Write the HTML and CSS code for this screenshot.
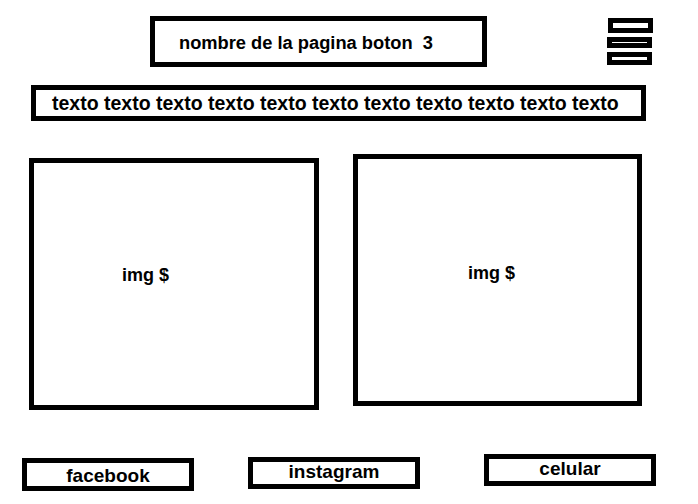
FILE: index.html
```html
<!DOCTYPE html>
<html>
<head>
    <meta charset="UTF-8">
    <meta name="viewport" content="width=device-width, initial-scale=1.0">
    <title>nombre de la pagina</title>
    <link rel="stylesheet" href="styles.css">
</head>
<body>
  <div class="top">
      <div class="title">nombre de la pagina boton&nbsp; 3</div>
      <div class="menu">
          <span class="bar bar1"></span>
          <span class="bar bar2"></span>
          <span class="bar bar3"></span>
      </div>
  </div>

  <div class="texto">texto texto texto texto texto texto texto texto texto texto texto</div>

  <div class="imgs">
      <div class="img img1">img $</div>
      <div class="img img2">img $</div>
  </div>

  <div class="footer">
      <div class="btn fb">facebook</div>
      <div class="btn ig">instagram</div>
      <div class="btn cel">celular</div>
  </div>
</body>
</html>
```

FILE: styles.css
```css
* {
  box-sizing: border-box;
}

body {
  margin: 0;
  background-color: #fff;
  color: #000;
  font-family: "Liberation Sans", Arial, sans-serif;
  font-weight: bold;
  font-size: 18px;
}

.top {
  display: flex;
  align-items: flex-start;
  padding-top: 16px;
}
.title {
  margin-left: 150px;
  width: 337px;
  height: 51px;
  border: 5px solid #000;
  display: flex;
  align-items: center;
  padding-left: 24px;
  padding-top: 2px;
  font-size: 18.3px;
}
.menu {
  margin-left: 120px;
  margin-top: 2px;
  display: flex;
  flex-direction: column;
}
.bar {
  display: block;
  width: 45px;
  border: 5px solid #000;
}
.bar1 {
  height: 15px;
  margin-left: 1px;
}
.bar2 {
  height: 11px;
  margin-top: 4px;
}
.bar3 {
  height: 13px;
  margin-top: 4px;
}

.texto {
  margin: 18px 0 0 31px;
  width: 615px;
  height: 36px;
  border: 5px solid #000;
  display: flex;
  align-items: center;
  padding-left: 16px;
  font-size: 19.5px;
  white-space: nowrap;
}

.imgs {
  display: flex;
  align-items: flex-start;
  margin-top: 33px;
}
.img {
  height: 252px;
  border: 5px solid #000;
  display: flex;
  align-items: center;
}
.img1 {
  margin: 4px 0 0 29px;
  width: 290px;
  padding-left: 88px;
  padding-bottom: 18px;
}
.img2 {
  margin-left: 34px;
  width: 289px;
  justify-content: center;
  padding-right: 12px;
  padding-bottom: 14px;
}

.footer {
  display: flex;
  align-items: flex-start;
  margin-top: 44px;
  font-size: 19px;
}
.btn {
  width: 172px;
  height: 32px;
  border: 5px solid #000;
  display: flex;
  align-items: center;
  justify-content: center;
}
.fb {
  margin: 4px 0 0 22px;
  height: 33px;
  padding-top: 3px;
}
.ig {
  margin: 3px 0 0 54px;
  padding-bottom: 2px;
}
.cel {
  margin-left: 64px;
  padding-bottom: 2px;
}
```
